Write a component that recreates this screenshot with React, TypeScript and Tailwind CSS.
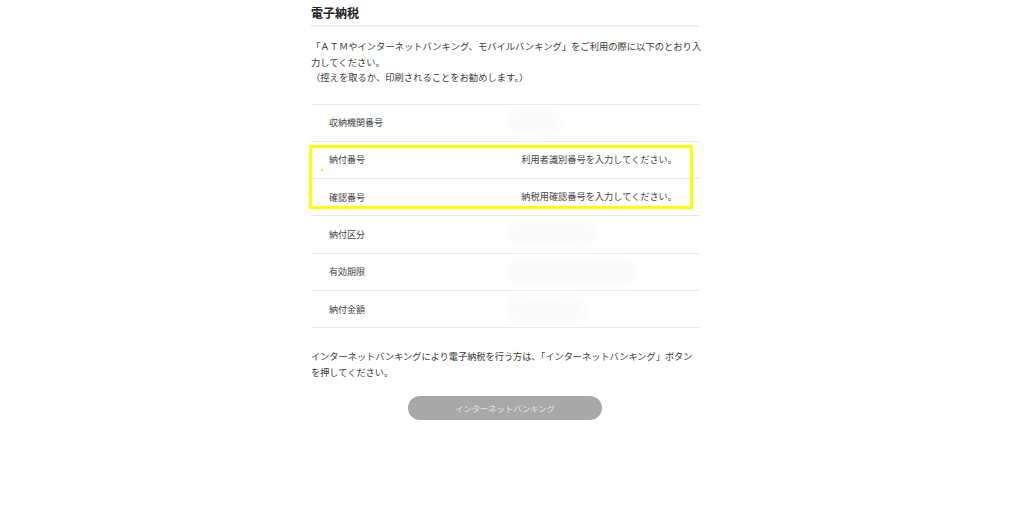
import React from 'react';

interface Row {
  label: string;
  value?: string;
  blob?: string;
}

const rows: Row[] = [
  { label: '収納機関番号', blob: 'w-[56px]' },
  { label: '納付番号', value: '利用者識別番号を入力してください。' },
  { label: '確認番号', value: '納税用確認番号を入力してください。' },
  { label: '納付区分', blob: 'w-[92px]' },
  { label: '有効期限', blob: 'w-[130px]' },
  { label: '納付金額', blob: 'w-[80px]' },
];

const App: React.FC = () => {
  return (
    <main
      className="h-[509px] w-full overflow-hidden bg-white text-[#3a3a3a]"
      style={{ fontFamily: '"Noto Sans CJK JP", "Noto Sans", sans-serif' }}
    >
      <div className="relative ml-[311px] w-[388px]">
        {/* 見出し */}
        <h1 className="border-b-2 border-[#ececec] pb-[4px] pt-[5px] text-[12px] font-bold leading-[16px] text-[#222]">
          電子納税
        </h1>

        <p className="mb-[18px] mt-[12px] w-[392px] text-[9.3px] leading-[15.5px]">
          「ＡＴＭやインターネットバンキング、モバイルバンキング」をご利用の際に以下のとおり入力してください。
          <br />
          （控えを取るか、印刷されることをお勧めします。）
        </p>

        {/* 入力項目 */}
        <div className="border-t border-[#e6e6e6]">
          {rows.map((row) => (
            <div
              key={row.label}
              className="flex h-[37.33px] items-center border-b border-[#e6e6e6] text-[9px] text-[#444]"
            >
              <span className="w-[195px] pl-[18px]">{row.label}</span>
              {row.blob && (
                <span className={`${row.blob} h-[26px] rounded-full bg-[#fafafa] blur-[5px]`} />
              )}
              {row.value && <span className="ml-auto pr-[22px] text-[9.2px]">{row.value}</span>}
            </div>
          ))}
        </div>

        {/* 注記ハイライト */}
        <div className="pointer-events-none absolute left-[-2px] top-[145px] h-[64px] w-[384px] border-[3px] border-[#ffff00]" />
        <div className="pointer-events-none absolute left-[10px] top-[169px] h-[2px] w-[2px] bg-[#ffee00]" />

        <p className="mt-[21px] text-[9.2px] leading-[15.5px]">
          インターネットバンキングにより電子納税を行う方は、「インターネットバンキング」ボタンを押してください。
        </p>

        <div className="mt-[16px] flex justify-center">
          <button
            type="button"
            className="h-[24px] w-[194px] rounded-full bg-[#a8a8a8] text-[8.3px] text-[#e4e4e4]"
          >
            インターネットバンキング
          </button>
        </div>
      </div>
    </main>
  );
};

export default App;
